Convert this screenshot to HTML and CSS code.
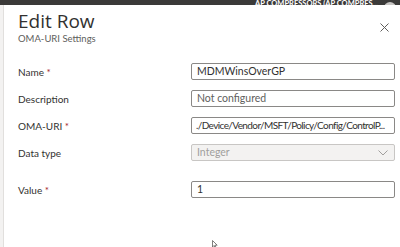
FILE: index.html
```html
<!DOCTYPE html>
<html lang="en">
<head>
    <meta charset="UTF-8">
    <title>Edit Row</title>
    <link rel="stylesheet" href="styles.css">
</head>
<body>
    <!-- Portal top bar (mostly scrolled out of view) -->
    <div class="topbar">
        <span class="account">AP COMPRESSORS (AP COMPRES...</span>
        <span class="avatar"></span>
    </div>

    <div class="shell">
        <div class="gutter"></div>

        <!-- Edit Row blade -->
        <div class="panel">
            <div class="panel-header">
                <div>
                    <h1>Edit Row</h1>
                    <p class="subtitle">OMA-URI Settings</p>
                </div>
                <button class="close-btn" aria-label="Close">
                    <svg width="9" height="9" viewBox="0 0 9 9">
                        <path d="M0.5 0.5 L8.5 8.5 M8.5 0.5 L0.5 8.5" stroke="#605e5c" stroke-width="1" fill="none"/>
                    </svg>
                </button>
            </div>

            <div class="form">
                <label class="field-label">Name <span class="req">*</span></label>
                <div class="input">MDMWinsOverGP</div>

                <label class="field-label">Description</label>
                <div class="input placeholder">Not configured</div>

                <label class="field-label">OMA-URI <span class="req">*</span></label>
                <div class="input uri">./Device/Vendor/MSFT/Policy/Config/ControlP...</div>

                <label class="field-label">Data type</label>
                <div class="input disabled">
                    <span>Integer</span>
                    <svg width="10" height="6" viewBox="0 0 10 6">
                        <path d="M0.5 0.5 L5 5 L9.5 0.5" stroke="#a19f9d" stroke-width="1" fill="none"/>
                    </svg>
                </div>

                <label class="field-label spaced">Value <span class="req">*</span></label>
                <div class="input spaced">1</div>
            </div>
        </div>
    </div>

    <!-- mouse pointer -->
    <svg class="pointer" width="6" height="8" viewBox="0 0 6 8">
        <path d="M0.5 0.5 L0.5 7 L2 5.5 L3.2 7.8 L4 7.4 L3 5.2 L5.2 5.2 Z" fill="#fff" stroke="#605e5c" stroke-width="0.8"/>
    </svg>
</body>
</html>
```

FILE: styles.css
```css
/* Reset and body styling */
* {
    margin: 0;
    padding: 0;
    box-sizing: border-box;
    font-family: Lato, "Open Sans", sans-serif;
}

body {
    width: 400px;
    height: 247px;
    overflow: hidden;
    background-color: #fff;
    color: #323130;
    position: relative;
}

/* Top bar */
.topbar {
    height: 5px;
    background-color: #3b3a39;
    display: flex;
    justify-content: flex-end;
    align-items: flex-end;
    overflow: hidden;
    padding-right: 4px;
}

.account {
    color: #fff;
    font-size: 7.5px;
    font-weight: 700;
    line-height: 8px;
    margin-bottom: -3px;
    margin-right: 6px;
    white-space: nowrap;
}

.avatar {
    width: 12px;
    height: 12px;
    border-radius: 50%;
    background-color: #c8c6c4;
    margin-bottom: -9px;
}

.shell {
    display: flex;
    height: 242px;
}

.gutter {
    width: 4px;
    background-color: #f3f2f1;
    border-right: 1px solid #e1dfdd;
}

/* Blade */
.panel {
    flex: 1;
    padding: 5px 4px 0 14px;
}

.panel-header {
    display: flex;
    justify-content: space-between;
    align-items: flex-start;
}

.panel-header h1 {
    font-family: "Open Sans", sans-serif;
    font-size: 19px;
    font-weight: 400;
    line-height: 22px;
    color: #323130;
}

.subtitle {
    font-size: 9.5px;
    line-height: 12px;
    color: #605e5c;
    margin-top: 1px;
}

.close-btn {
    background: none;
    border: none;
    margin: 13px 7px 0 0;
    width: 9px;
    height: 9px;
    display: flex;
}

/* Form grid */
.form {
    display: grid;
    grid-template-columns: 173px 204px;
    row-gap: 10px;
    margin-top: 18px;
    align-items: center;
}

.field-label {
    font-size: 10px;
    color: #323130;
}

.req {
    color: #a4262c;
}

.input {
    height: 17px;
    border: 1px solid #8a8886;
    border-radius: 2px;
    font-size: 10.5px;
    line-height: 15px;
    padding: 0 5px;
    color: #323130;
    white-space: nowrap;
    overflow: hidden;
}

.input.uri {
    font-size: 10px;
    letter-spacing: -0.6px;
    padding: 0 3px 0 4px;
}

.input.placeholder {
    color: #605e5c;
}

.input.disabled {
    background-color: #f3f2f1;
    border-color: #c8c6c4;
    color: #a19f9d;
    display: flex;
    justify-content: space-between;
    align-items: center;
    padding-right: 6px;
}

.spaced {
    margin-top: 10px;
}

.pointer {
    position: absolute;
    left: 212px;
    top: 240px;
}
```
